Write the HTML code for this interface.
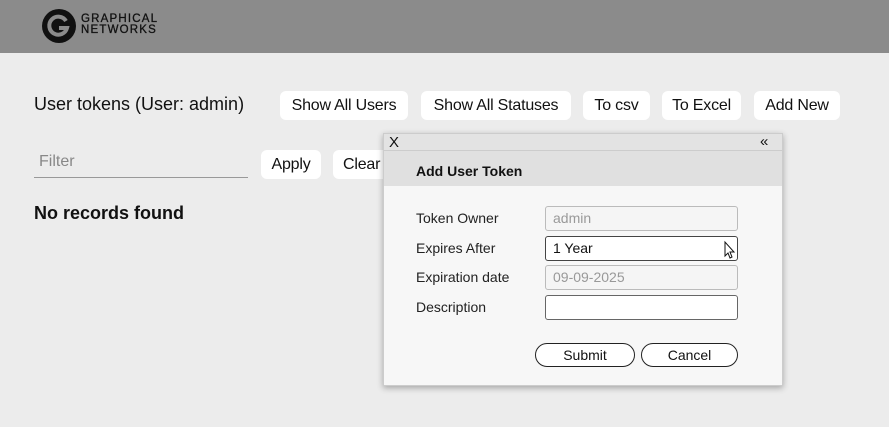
<!DOCTYPE html>
<html><head><style>
*{box-sizing:border-box;margin:0;padding:0}
body{width:889px;height:427px;background:#ececec;font-family:"Liberation Sans",sans-serif;position:relative;overflow:hidden;color:#111}
.hdr{position:absolute;left:0;top:0;width:889px;height:53px;background:#8b8b8b}
.btn{position:absolute;background:#fff;border-radius:6px;height:29px;font-size:16px;line-height:29px;text-align:center;color:#111;letter-spacing:-0.2px}
.abs{position:absolute}
.inp{position:absolute;left:545px;width:193px;height:25px;border:1px solid #bbb;border-radius:3px;background:#f5f5f5;font-size:14px;line-height:23px;padding-left:7px;color:#999}
.lbl{position:absolute;left:416px;font-size:14px;color:#222}
.pb{position:absolute;top:343px;height:24px;border:1px solid #222;border-radius:12px;background:#fff;font-size:14px;line-height:22px;text-align:center}
</style></head><body>
<div class="hdr">
<svg class="abs" style="left:42px;top:9px" width="34" height="34" viewBox="0 0 34 34"><circle cx="17" cy="17" r="17" fill="#111"/><path d="M24 12 A9 9 0 1 0 25 19 H17" stroke="#8b8b8b" stroke-width="4" fill="none"/></svg>
<div class="abs" style="left:81px;top:14px;font-size:11.5px;line-height:11px;color:#111;letter-spacing:1.2px;-webkit-text-stroke:0.3px #111">GRAPHICAL<br>NETWORKS</div>
</div>
<div class="abs" style="left:34px;top:94px;font-size:18px">User tokens (User: admin)</div>
<div class="btn" style="left:280px;top:91px;width:128px">Show All Users</div>
<div class="btn" style="left:421px;top:91px;width:150px">Show All Statuses</div>
<div class="btn" style="left:583px;top:91px;width:67px">To csv</div>
<div class="btn" style="left:662px;top:91px;width:79px">To Excel</div>
<div class="btn" style="left:754px;top:91px;width:86px">Add New</div>
<div class="abs" style="left:34px;top:153px;width:214px;height:25px;border-bottom:1px solid #999;font-size:16px;color:#888;padding-left:5px">Filter</div>
<div class="btn" style="left:261px;top:150px;width:60px">Apply</div>
<div class="btn" style="left:333px;top:150px;width:60px;text-align:left;padding-left:10px">Clear</div>
<div class="abs" style="left:34px;top:203px;font-size:18px;font-weight:bold">No records found</div>
<div class="abs" style="left:383px;top:133px;width:400px;height:253px;background:#f7f7f7;border:1px solid #ccc;box-shadow:0 2px 6px rgba(0,0,0,.3)">
<div class="abs" style="left:0;top:0;width:398px;height:17px;background:#e3e3e3;border-bottom:1px solid #ccc"></div>
<div class="abs" style="left:5px;top:0;font-size:15px">X</div>
<div class="abs" style="left:376px;top:-1px;font-size:15px">«</div>
<div class="abs" style="left:0;top:17px;width:398px;height:35px;background:#e0e0e0"></div>
<div class="abs" style="left:32px;top:29px;font-size:14px;font-weight:bold">Add User Token</div>
</div>
<div class="lbl" style="top:210px">Token Owner</div>
<div class="inp" style="top:206px">admin</div>
<div class="lbl" style="top:240px">Expires After</div>
<div class="inp" style="top:236px;background:#fff;border-color:#444;color:#111">1 Year</div>
<svg class="abs" style="left:721px;top:240px" width="16" height="20" viewBox="0 0 16 20"><path d="M4 2 L4 16 L7 13 L9 18 L11 17 L9 12 L13 12 Z" fill="#fff" stroke="#111" stroke-width="1"/></svg>
<div class="lbl" style="top:269px">Expiration date</div>
<div class="inp" style="top:265px">09-09-2025</div>
<div class="lbl" style="top:299px">Description</div>
<div class="inp" style="top:295px;background:#fff;border-color:#666"></div>
<div class="pb" style="left:535px;width:100px">Submit</div>
<div class="pb" style="left:641px;width:97px">Cancel</div>
</body></html>
